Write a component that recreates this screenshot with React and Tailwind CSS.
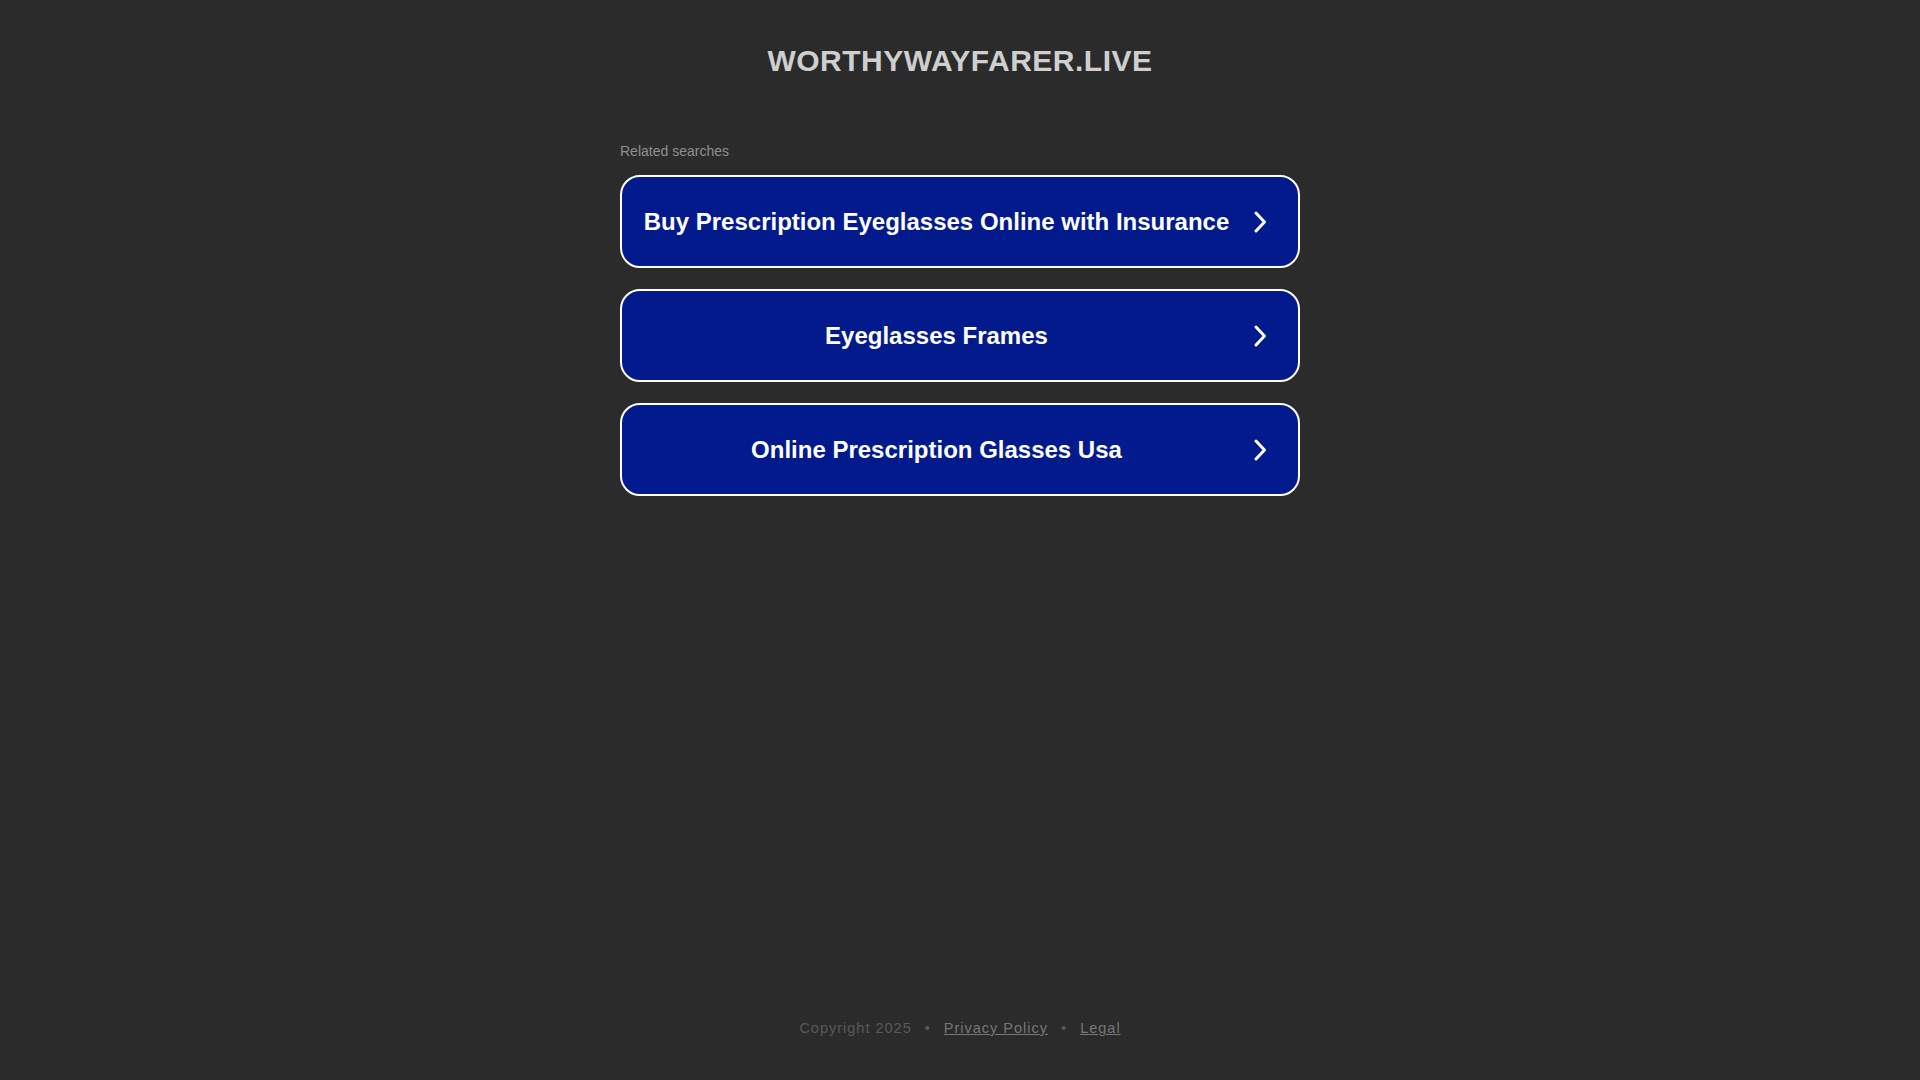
const searches = [
  'Buy Prescription Eyeglasses Online with Insurance',
  'Eyeglasses Frames',
  'Online Prescription Glasses Usa',
];

function Chevron() {
  return (
    <svg width="14" height="24" viewBox="0 0 14 24" fill="none" className="shrink-0">
      <path d="M3 3l8.5 9L3 21" stroke="white" strokeWidth="3" strokeLinecap="round" strokeLinejoin="round" />
    </svg>
  );
}

export default function App() {
  return (
    <div className="min-h-screen bg-[#2b2b2b] flex flex-col items-center font-['Liberation_Sans',Arial,sans-serif]">
      <h1 className="mt-[44px] text-[30px] leading-[34px] font-bold text-[#cfcfcf] tracking-[0.5px]">
        WORTHYWAYFARER.LIVE
      </h1>

      <div className="w-[680px] mt-[65px]">
        <div className="text-[14px] leading-[17px] text-[#8f8f8f]">Related searches</div>
        <div className="mt-[15px] flex flex-col gap-[21px]">
          {searches.map((s) => (
            <a
              key={s}
              href="#"
              className="h-[93px] rounded-[20px] border-2 border-white bg-[#021a8c] flex items-center pl-[20px] pr-[31px]"
            >
              <span className="flex-1 text-center text-[24px] font-bold text-white">{s}</span>
              <span className="ml-[22px]">
                <Chevron />
              </span>
            </a>
          ))}
        </div>
      </div>

      <div className="flex-1" />

      <footer className="mb-[43px] text-[14.5px] leading-[18px] tracking-[1px] text-[#5a5a5a] flex items-center gap-[13px]">
        <span>Copyright 2025</span>
        <span>•</span>
        <a href="#" className="underline text-[#777]">Privacy Policy</a>
        <span>•</span>
        <a href="#" className="underline text-[#777]">Legal</a>
      </footer>
    </div>
  );
}
